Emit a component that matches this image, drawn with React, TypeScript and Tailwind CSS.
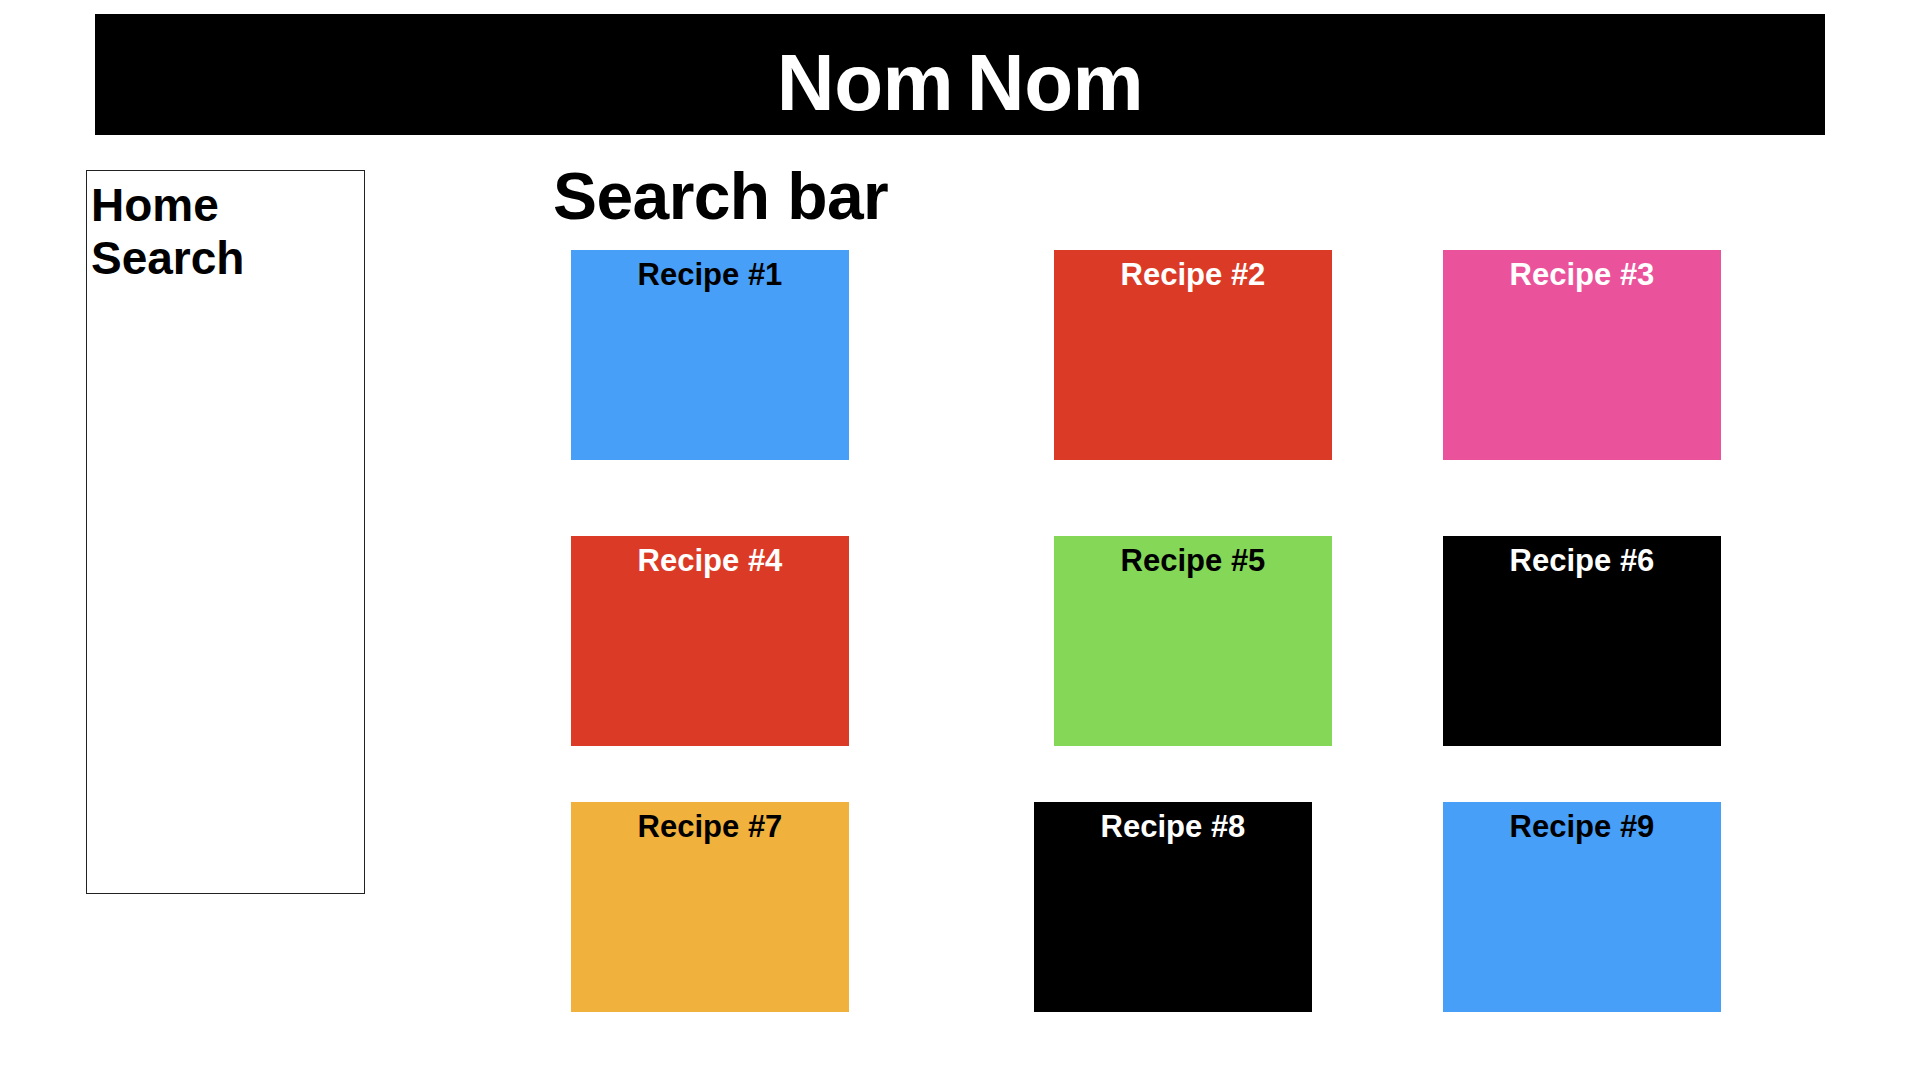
import React from "react";

type Card = { label: string; bg: string; text: string };

const font = { fontFamily: '"Liberation Sans", Arial, Helvetica, sans-serif' };

function RecipeCard({ label, bg, text }: Card) {
  return (
    <div className={`w-[278px] h-[210px] shrink-0 ${bg} ${text} pt-[7px] text-center`}>
      <div className="text-[31px] leading-[36px] font-bold">{label}</div>
    </div>
  );
}

export default function App() {
  return (
    <div className="w-[1920px] h-[1080px] bg-white overflow-hidden" style={font}>
      <header className="mt-[14px] mx-auto w-[1730px] h-[121px] bg-black text-white flex justify-center pt-[29px]">
        <h1 className="text-[80px] leading-[80px] font-bold tracking-[-0.5px] [word-spacing:-8px]">Nom Nom</h1>
      </header>

      <div className="flex mt-[35px]">
        <nav className="ml-[86px] w-[279px] h-[724px] border border-[#222] pt-[8px] pl-[4px] shrink-0">
          <div className="text-[46px] leading-[53px] font-bold text-black">Home</div>
          <div className="text-[46px] leading-[53px] font-bold text-black">Search</div>
        </nav>

        <main className="ml-[188px] flex flex-col">
          <h2 className="text-[66px] leading-[66px] font-bold tracking-[-0.6px] text-black mt-[-7px]">Search bar</h2>

          <div className="ml-[18px] mt-[21px] flex flex-col">
            <div className="flex">
              <RecipeCard label="Recipe #1" bg="bg-[#479FF8]" text="text-black" />
              <div className="w-[205px] shrink-0" />
              <RecipeCard label="Recipe #2" bg="bg-[#DB3B26]" text="text-white" />
              <div className="w-[111px] shrink-0" />
              <RecipeCard label="Recipe #3" bg="bg-[#EA539C]" text="text-white" />
            </div>
            <div className="flex mt-[76px]">
              <RecipeCard label="Recipe #4" bg="bg-[#DB3B26]" text="text-white" />
              <div className="w-[205px] shrink-0" />
              <RecipeCard label="Recipe #5" bg="bg-[#84D757]" text="text-black" />
              <div className="w-[111px] shrink-0" />
              <RecipeCard label="Recipe #6" bg="bg-black" text="text-white" />
            </div>
            <div className="flex mt-[56px]">
              <RecipeCard label="Recipe #7" bg="bg-[#F1B13D]" text="text-black" />
              <div className="w-[185px] shrink-0" />
              <RecipeCard label="Recipe #8" bg="bg-black" text="text-white" />
              <div className="w-[131px] shrink-0" />
              <RecipeCard label="Recipe #9" bg="bg-[#479FF8]" text="text-black" />
            </div>
          </div>
        </main>
      </div>
    </div>
  );
}
